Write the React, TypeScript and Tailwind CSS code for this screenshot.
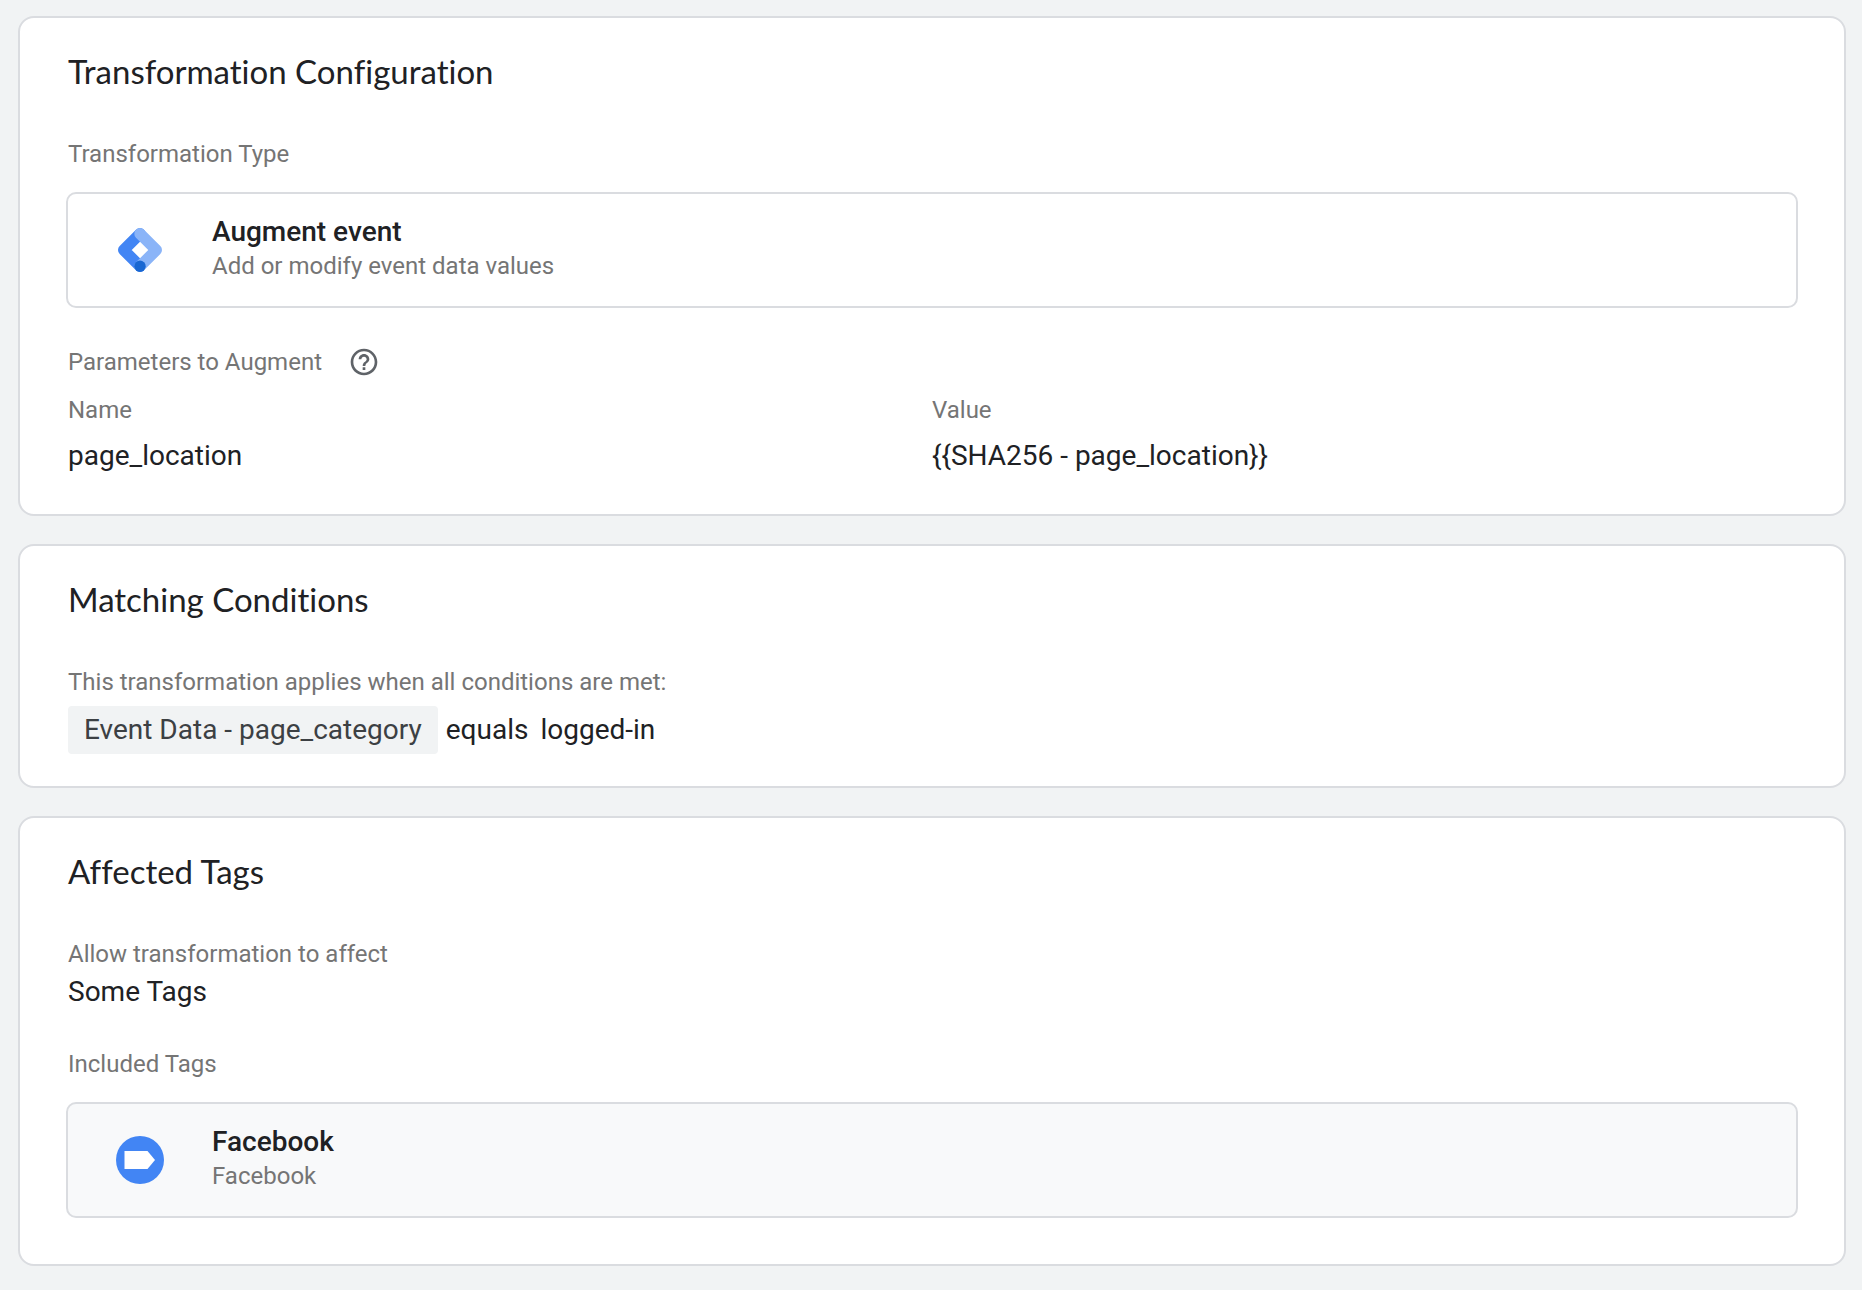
import type { ReactNode } from "react";
import { MdHelpOutline } from "react-icons/md";

const parameters = [{ name: "page_location", value: "{{SHA256 - page_location}}" }];

function Card({ title, className, children }: { title: string; className: string; children: ReactNode }) {
  return (
    <section className={`rounded-2xl border-2 border-[#dadce0] bg-white px-[46px] pt-[33px] ${className}`}>
      <h2 className="mb-[47px] px-0.5 font-['Lato',sans-serif] text-[33px] leading-10 [font-variant-ligatures:none]">
        {title}
      </h2>
      {children}
    </section>
  );
}

function Label({ children }: { children: ReactNode }) {
  return <p className="px-0.5 text-2xl leading-8 text-[#757575]">{children}</p>;
}

type EntityRowProps = {
  icon: ReactNode;
  title: string;
  subtitle: string;
  className?: string;
};

function EntityRow({ icon, title, subtitle, className = "" }: EntityRowProps) {
  return (
    <a
      href="#"
      className={`mt-[22px] flex items-center gap-12 rounded-[10px] border-2 border-[#dadce0] px-12 ${className}`}
    >
      {icon}
      <div className="pt-5 pb-6">
        <p className="text-[28px] leading-9 font-medium">{title}</p>
        <p className="text-2xl leading-8 text-[#757575]">{subtitle}</p>
      </div>
    </a>
  );
}

function TagManagerIcon() {
  return (
    <svg viewBox="0 0 48 48" className="size-12 shrink-0" fill="none" aria-hidden="true">
      <g strokeWidth="11.4" strokeLinecap="round" strokeLinejoin="round">
        <path d="M24 7.7 7.7 24 24 40.3" stroke="#4285f4" />
        <path d="M24 7.7 40.3 24 24 40.3" stroke="#8ab4f8" />
      </g>
      <circle cx="24" cy="40.3" r="5.7" fill="#1967d2" />
    </svg>
  );
}

function TagIcon() {
  return (
    <svg viewBox="0 0 48 48" className="size-12 shrink-0" aria-hidden="true">
      <circle cx="24" cy="24" r="24" fill="#4285f4" />
      <path d="M8.500 15h23l7.500 9-7.500 9h-23z" fill="#fff" />
    </svg>
  );
}

export default function App() {
  return (
    <main className="flex min-h-screen flex-col gap-7 bg-[#f1f3f4] pt-4 pr-4 pb-6 pl-[18px] font-['Roboto',sans-serif] text-[#202124]">
      <Card title="Transformation Configuration" className="pb-[42px]">
        <Label>Transformation Type</Label>
        <EntityRow icon={<TagManagerIcon />} title="Augment event" subtitle="Add or modify event data values" />

        <div className="mt-[38px] flex items-center gap-6">
          <Label>Parameters to Augment</Label>
          <button type="button" aria-label="Help" className="text-[#5f6368]">
            <MdHelpOutline size={32} />
          </button>
        </div>
        <table className="mt-4 w-full table-fixed text-left">
          <thead>
            <tr className="text-2xl leading-8 text-[#757575]">
              <th className="pb-3.5 pl-0.5 font-normal">Name</th>
              <th className="pb-3.5 font-normal">Value</th>
            </tr>
          </thead>
          <tbody>
            {parameters.map((param) => (
              <tr key={param.name} className="text-[28px] leading-8">
                <td className="pl-0.5">{param.name}</td>
                <td>{param.value}</td>
              </tr>
            ))}
          </tbody>
        </table>
      </Card>

      <Card title="Matching Conditions" className="pb-8">
        <Label>This transformation applies when all conditions are met:</Label>
        <div className="mt-2 flex items-center px-0.5 text-[28px] leading-8">
          <span className="mr-2 rounded-sm bg-[#f1f3f4] px-4 py-2 text-[#3c4043]">Event Data - page_category</span>
          <span className="mr-3">equals</span>
          <span>logged-in</span>
        </div>
      </Card>

      <Card title="Affected Tags" className="pb-[46px]">
        <Label>Allow transformation to affect</Label>
        <p className="mt-1.5 px-0.5 text-[28px] leading-8">Some Tags</p>
        <div className="mt-10">
          <Label>Included Tags</Label>
        </div>
        <EntityRow icon={<TagIcon />} title="Facebook" subtitle="Facebook" className="bg-[#f8f9fa]" />
      </Card>
    </main>
  );
}
